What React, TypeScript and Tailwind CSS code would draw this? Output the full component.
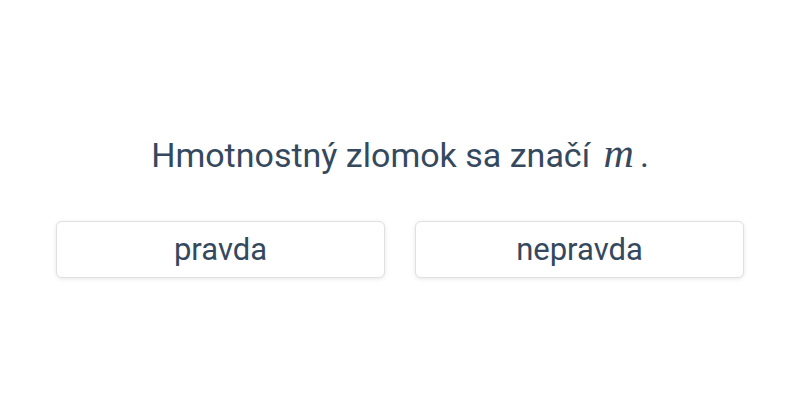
export default function App() {
  return (
    <div className="w-[800px] h-[400px] bg-white pt-[131px] px-[56px] text-[#34495e]" style={{ fontFamily: "Roboto, sans-serif" }}>
      <div className="text-center text-[34px] leading-[48px]">
        Hmotnostný zlomok sa značí{" "}
        <span className="ml-[5px] mr-[6px] italic text-[42px] leading-[0]" style={{ fontFamily: "'Liberation Serif', 'DejaVu Serif', serif" }}>m</span>.
      </div>
      <div className="mt-[42px] grid grid-cols-2 gap-[30px]">
        <button className="h-[57px] rounded-md border border-[#e0e0e0] bg-white shadow-[0_1px_4px_rgba(0,0,0,0.1)] text-[31px] leading-[1] text-[#34495e]">
          pravda
        </button>
        <button className="h-[57px] rounded-md border border-[#e0e0e0] bg-white shadow-[0_1px_4px_rgba(0,0,0,0.1)] text-[31px] leading-[1] text-[#34495e]">
          nepravda
        </button>
      </div>
    </div>
  );
}
